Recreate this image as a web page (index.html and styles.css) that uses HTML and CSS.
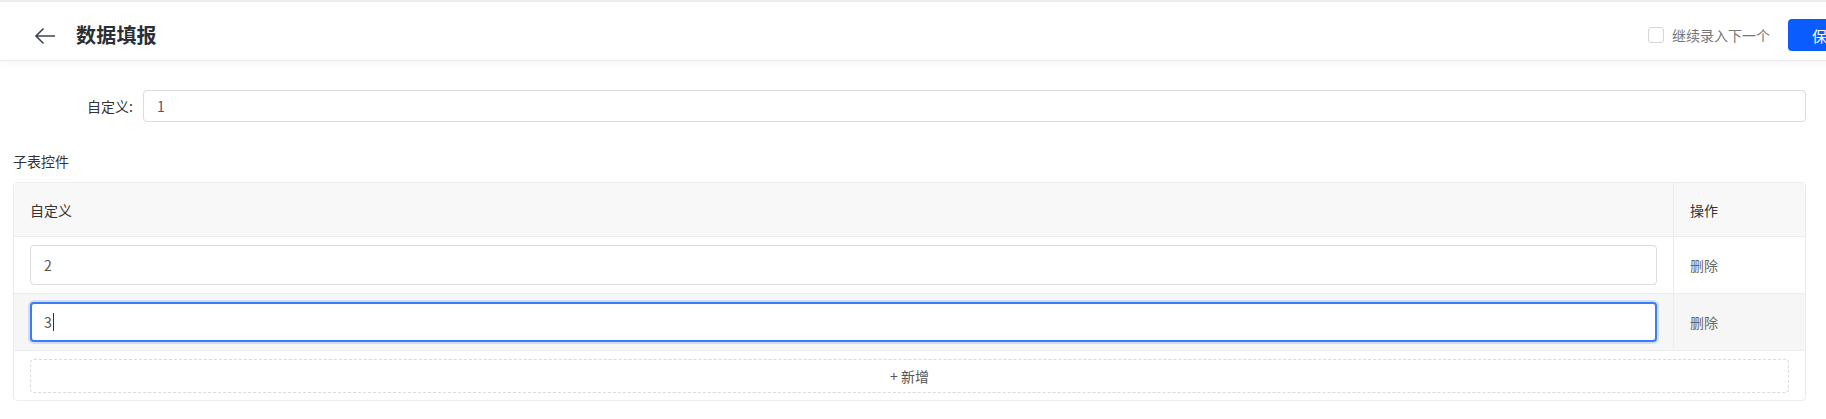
FILE: index.html
```html
<!DOCTYPE html>
<html lang="zh">
<head>
<meta charset="utf-8">
<link rel="stylesheet" href="styles.css">
</head>
<body>
<header class="topbar">
  <div class="topbar-left">
    <svg class="back" width="22" height="18" viewBox="0 0 22 18"><path d="M21 9H2M9.5 1.5L2 9l7.5 7.5" fill="none" stroke="#3d4452" stroke-width="1.6"/></svg>
    <h1 class="title">数据填报</h1>
  </div>
  <div class="topbar-right">
    <label class="check"><span class="box"></span><span class="check-text">继续录入下一个</span></label>
    <button class="save">保存</button>
  </div>
</header>
<main class="content">
  <div class="form-row">
    <label class="form-label">自定义:</label>
    <div class="input main-input">1</div>
  </div>
  <div class="section-title">子表控件</div>
  <div class="table">
    <div class="tr thead">
      <div class="td col-main">自定义</div>
      <div class="td col-op">操作</div>
    </div>
    <div class="tr">
      <div class="td col-main"><div class="input cell-input">2</div></div>
      <div class="td col-op link">删除</div>
    </div>
    <div class="tr hover">
      <div class="td col-main"><div class="input cell-input focus">3<span class="caret"></span></div></div>
      <div class="td col-op link">删除</div>
    </div>
    <div class="add-row">
      <div class="add-btn">+&nbsp;新增</div>
    </div>
  </div>
</main>
</body>
</html>
```
FILE: styles.css
```css
html, body { margin: 0; padding: 0; background: #fff; overflow: hidden; }
body { font-family: "Noto Sans CJK SC", "Noto Sans", sans-serif; font-size: 14px; color: #333; width: 1826px; height: 419px; }
.topbar {
  height: 61px; border-top: 2px solid #ececf0; border-bottom: 1px solid #ececf0;
  display: flex; align-items: center; justify-content: space-between;
  padding-left: 34px; padding-top: 8px; width: 1866px; box-sizing: border-box;
  box-shadow: 0 3px 8px rgba(20, 30, 60, 0.04);
  background: #fff; position: relative;
}
.topbar-left { display: flex; align-items: center; }
.back { display: block; margin-right: 20px; margin-top: 1px; }
.title { margin: 0; font-size: 20px; font-weight: 700; color: #2b2f36; letter-spacing: 0.2px; line-height: 1; }
.topbar-right { display: flex; align-items: center; }
.check { display: flex; align-items: center; color: #777; font-size: 14px; margin-right: 18px; }
.box { width: 14px; height: 14px; border: 1px solid #d6d6d6; border-radius: 3px; margin-right: 8px; background: #fff; }
.save { width: 78px; height: 32px; background: #0a5cff; color: #fff; border: none; border-radius: 4px; font-size: 15px; font-family: inherit; padding: 0; text-align: left; padding-left: 24px; }
.content { padding: 29px 20px 0 13px; }
.form-row { display: flex; align-items: center; }
.form-label { width: 130px; text-align: right; padding-right: 10px; box-sizing: border-box; font-size: 14px; color: #333; }
.input { border: 1px solid #dcdcdc; border-radius: 4px; box-sizing: border-box; display: flex; align-items: center; padding-left: 13px; color: #555; font-size: 14px; background: #fff; }
.main-input { flex: 1; height: 32px; color: #5a5560; }
.section-title { margin-top: 29px; font-size: 14px; color: #333; height: 20px; line-height: 20px; }
.table { margin-top: 11px; border: 1px solid #ececec; border-radius: 4px; }
.tr { display: flex; border-bottom: 1px solid #ececec; }
.thead { height: 53px; background: #f8f8f8; }
.td { display: flex; align-items: center; box-sizing: border-box; }
.col-main { flex: 1; padding: 0 16px; }
.col-op { width: 132px; border-left: 1px solid #ececec; padding-left: 16px; }
.tr:not(.thead) { height: 56px; }
.hover { background: #f6f6f6; }
.link { color: #666; }
.cell-input { width: 100%; height: 40px; }
.focus { border: 2px solid #3b7cf6; box-shadow: 0 0 0 2px rgba(59, 124, 246, 0.2); padding-left: 12px; }
.caret { display: inline-block; width: 1px; height: 18px; background: #333; margin-left: 1px; }
.add-row { padding: 8px 16px 7px 16px; }
.add-btn { height: 32px; border: 1px dashed #dadada; border-radius: 4px; display: flex; align-items: center; justify-content: center; color: #555; font-size: 14px; }
```
